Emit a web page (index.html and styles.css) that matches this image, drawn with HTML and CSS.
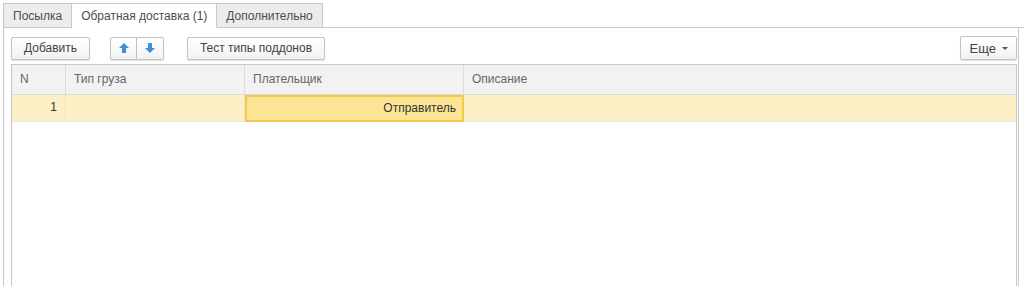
FILE: index.html
```html
<!DOCTYPE html>
<html lang="ru">
<head>
<meta charset="utf-8">
<link rel="stylesheet" href="styles.css">
</head>
<body>
<div class="tabs">
  <div class="tab">Посылка</div>
  <div class="tab active">Обратная доставка (1)</div>
  <div class="tab">Дополнительно</div>
  <div class="tab-fill"></div>
</div>
<div class="panel">
  <div class="toolbar">
    <button class="btn add">Добавить</button>
    <div class="btn-group">
      <button class="btn icon"><svg width="12" height="12" viewBox="0 0 12 12"><path d="M6 1 L11 6 L8 6 L8 11 L4 11 L4 6 L1 6 Z" fill="#3d8fd6"/></svg></button>
      <button class="btn icon"><svg width="12" height="12" viewBox="0 0 12 12"><path d="M6 11 L11 6 L8 6 L8 1 L4 1 L4 6 L1 6 Z" fill="#3d8fd6"/></svg></button>
    </div>
    <button class="btn test">Тест типы поддонов</button>
    <div class="spacer"></div>
    <button class="btn more">Еще <span class="caret"></span></button>
  </div>
  <div class="table">
    <div class="row head">
      <div class="cell c-n">N</div>
      <div class="cell c-type">Тип груза</div>
      <div class="cell c-payer">Плательщик</div>
      <div class="cell c-desc">Описание</div>
    </div>
    <div class="row data">
      <div class="cell c-n num">1</div>
      <div class="cell c-type"></div>
      <div class="cell c-payer selected">Отправитель</div>
      <div class="cell c-desc"></div>
    </div>
  </div>
</div>
</body>
</html>
```

FILE: styles.css
```css
* { box-sizing: border-box; }
html, body { margin: 0; padding: 0; background: #fff; }
body {
  font-family: Arial, "Liberation Sans", sans-serif;
  font-size: 12px;
  color: #4d4d4d;
  width: 1024px;
  height: 286px;
  overflow: hidden;
}
.tabs {
  display: flex;
  align-items: flex-end;
  padding: 3px 0 0 3px;
  height: 28px;
}
.tab {
  height: 25px;
  padding: 0 9px;
  line-height: 24px;
  border: 1px solid #c8c8c8;
  border-left: none;
  border-bottom-color: #c8c8c8;
  background: #ececec;
  color: #4d4d4d;
  white-space: nowrap;
}
.tab:first-child { border-left: 1px solid #c8c8c8; }
.tab.active {
  background: #fff;
  border-bottom-color: #fff;
}
.tab-fill {
  flex: 1;
  height: 1px;
  border-bottom: 1px solid #c8c8c8;
}
.panel {
  margin-left: 3px;
  margin-right: 5px;
  height: 258px;
  border-left: 1px solid #c8c8c8;
  border-right: 1px solid #c8c8c8;
  padding: 8px 1px 0 7px;
}
.toolbar {
  display: flex;
  align-items: center;
  height: 24px;
  margin-bottom: 4px;
}
.btn {
  font-family: Arial, "Liberation Sans", sans-serif;
  font-size: 12px;
  color: #444;
  height: 23px;
  background: linear-gradient(#ffffff, #f2f2f2);
  border: 1px solid #c2c2c2;
  border-radius: 2px;
  box-shadow: 0 1px 1px rgba(0,0,0,0.12);
  padding: 0 10px;
  cursor: default;
}
.add { width: 79px; }
.btn-group {
  display: flex;
  margin-left: 20px;
}
.btn.icon {
  width: 27px;
  padding: 0;
  display: flex;
  align-items: center;
  justify-content: center;
}
.btn-group .btn.icon:first-child { border-radius: 2px 0 0 2px; }
.btn-group .btn.icon:last-child { border-left: none; border-radius: 0 2px 2px 0; }
.test { margin-left: 23px; width: 138px; }
.spacer { flex: 1; }
.more {
  width: 57px;
  height: 24px;
  padding: 0 8px;
  display: flex;
  align-items: center;
  justify-content: flex-end;
  gap: 6px;
  font-size: 13px;
}
.caret {
  width: 0; height: 0;
  border-left: 3px solid transparent;
  border-right: 3px solid transparent;
  border-top: 3px solid #555;
}
.table {
  border: 1px solid #c8c8c8;
  height: 230px;
}
.row { display: flex; }
.cell {
  padding: 0 8px;
  white-space: nowrap;
}
.head {
  height: 30px;
  background: #f2f2f2;
  border-bottom: 1px solid #dcdcdc;
  line-height: 29px;
  color: #666;
}
.head .cell { border-right: 1px solid #dcdcdc; }
.head .cell:last-child { border-right: none; }
.c-n { width: 54px; }
.c-type { width: 179px; }
.c-payer { width: 219px; }
.c-desc { flex: 1; }
.data {
  height: 27px;
  background: #fbf0c6;
  line-height: 25px;
  color: #333;
  border-bottom: 1px solid #e8e8e8;
}
.num { text-align: right; }
.data .cell.c-n { border-right: 1px solid #efe6c0; }
.data .cell.c-type { border-right: 1px solid #efe6c0; }
.selected {
  background: #fbe595;
  border: 2px solid #f2c94c;
  text-align: right;
  padding: 0 6px;
  line-height: 22px;
  height: 27px;
}
```
